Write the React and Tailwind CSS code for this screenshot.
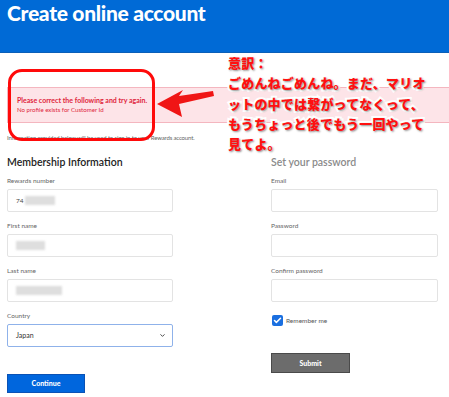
import { ChevronDown, Check } from 'lucide-react';

const Field = ({ label, children, className = '' }) => (
  <div className={`flex flex-col ${className}`}>
    <label className="text-[6.5px] leading-[8px] text-[#666] mb-[4px]">{label}</label>
    <div className="h-[23px] border border-[#e3e3e3] rounded-[2px] bg-white flex items-center px-[8px]">
      {children}
    </div>
  </div>
);

const Blur = ({ w, className = '' }) => (
  <span className={`inline-block h-[9px] bg-[#dedede] blur-[1px] ${className}`} style={{ width: w }} />
);

const App = () => {
  return (
    <div className="relative w-[449px] h-[397px] overflow-hidden bg-white font-['Lato','Liberation_Sans',sans-serif] text-[#222]">
      {/* Header */}
      <div className="h-[53px] bg-[#006ad6] border-b border-[#0a5fb8] px-[7px] pt-[1px]">
        <h1 className="text-white font-black text-[21px] leading-[24px] tracking-[-0.3px]">Create online account</h1>
      </div>

      {/* Error band */}
      <div className="ml-[7px] mt-[34px] h-[36px] bg-[#fde4e8] border border-[#f4b6bf] border-r-0 flex flex-col justify-center pl-[9px]">
        <p className="text-[7px] leading-[9px] font-bold text-[#e0243c]">Please correct the following and try again.</p>
        <p className="text-[6.1px] leading-[9px] text-[#e0243c]">No profile exists for Customer Id</p>
      </div>

      <p className="px-[7px] mt-[11px] text-[6px] leading-[8px] tracking-[-0.15px] text-[#666]">
        Information provided below will be used to sign in to your Rewards account.
      </p>

      {/* Form columns */}
      <div className="flex px-[7px] mt-[13px]">
        <div className="w-[166px] flex flex-col">
          <h2 className="text-[10.5px] leading-[14px] font-semibold text-[#222] mb-[8px]">Membership Information</h2>
          <Field label="Rewards number">
            <span className="text-[6.5px] text-[#444]">74</span>
            <Blur w={30} className="ml-[1px]" />
          </Field>
          <Field label="First name" className="mt-[10px]">
            <Blur w={29} />
          </Field>
          <Field label="Last name" className="mt-[10px]">
            <Blur w={46} className="h-[7px]" />
          </Field>
          <div className="flex flex-col mt-[10px]">
            <label className="text-[6.5px] leading-[8px] text-[#666] mb-[4px]">Country</label>
            <div className="h-[23px] border border-[#8fb2ea] rounded-[2px] bg-white flex items-center justify-between pl-[8px] pr-[6px]">
              <span className="text-[7px] text-[#333]">Japan</span>
              <ChevronDown className="w-[7px] h-[7px] text-[#333]" strokeWidth={3} />
            </div>
          </div>
          <button className="mt-[27px] w-[78px] h-[19px] bg-[#0066dd] border border-[#0a52b5] text-white text-[7px] font-black">
            Continue
          </button>
        </div>

        <div className="ml-[98px] w-[167px] flex flex-col">
          <h2 className="text-[10.5px] leading-[14px] font-semibold text-[#8a8a8a] mb-[8px]">Set your password</h2>
          <Field label="Email" />
          <Field label="Password" className="mt-[10px]" />
          <Field label="Confirm password" className="mt-[10px]" />
          <div className="flex items-center mt-[13px] ml-[1px]">
            <span className="w-[11px] h-[11px] rounded-[2px] bg-[#1a6fe0] flex items-center justify-center">
              <Check className="w-[9px] h-[9px] text-white" strokeWidth={4} />
            </span>
            <span className="ml-[3px] text-[6.5px] text-[#555]">Remember me</span>
          </div>
          <button className="mt-[27px] w-[79px] h-[20px] bg-[#6c6c6c] border border-[#4a4a4a] text-white text-[7px] font-black">
            Submit
          </button>
        </div>
      </div>

      {/* Annotation: red ring */}
      <div className="absolute left-[8px] top-[69px] w-[147px] h-[72px] border-[3px] border-[#ff0a0a] rounded-[14px]" />

      {/* Annotation: arrow */}
      <svg className="absolute left-[154px] top-[86px]" width="62" height="34" viewBox="0 0 62 34">
        <polygon points="3,18 29,4 25,10 59,5 60,10 25,18 28,31" fill="#f01515" />
      </svg>

      {/* Annotation: translation */}
      <div className="absolute left-[228px] top-[53px] font-['Noto_Sans_CJK_JP',sans-serif] font-black text-[13px] leading-[20.3px] tracking-[0.2px] text-[#ff1010] [-webkit-text-stroke:4px_white] [paint-order:stroke_fill] [text-shadow:1px_1px_2px_rgba(0,0,0,0.45)]">
        <p>意訳：</p>
        <p>ごめんねごめんね。まだ、マリオ</p>
        <p>ットの中では繋がってなくって、</p>
        <p>もうちょっと後でもう一回やって</p>
        <p>見てよ。</p>
      </div>
    </div>
  );
};

export default App;
